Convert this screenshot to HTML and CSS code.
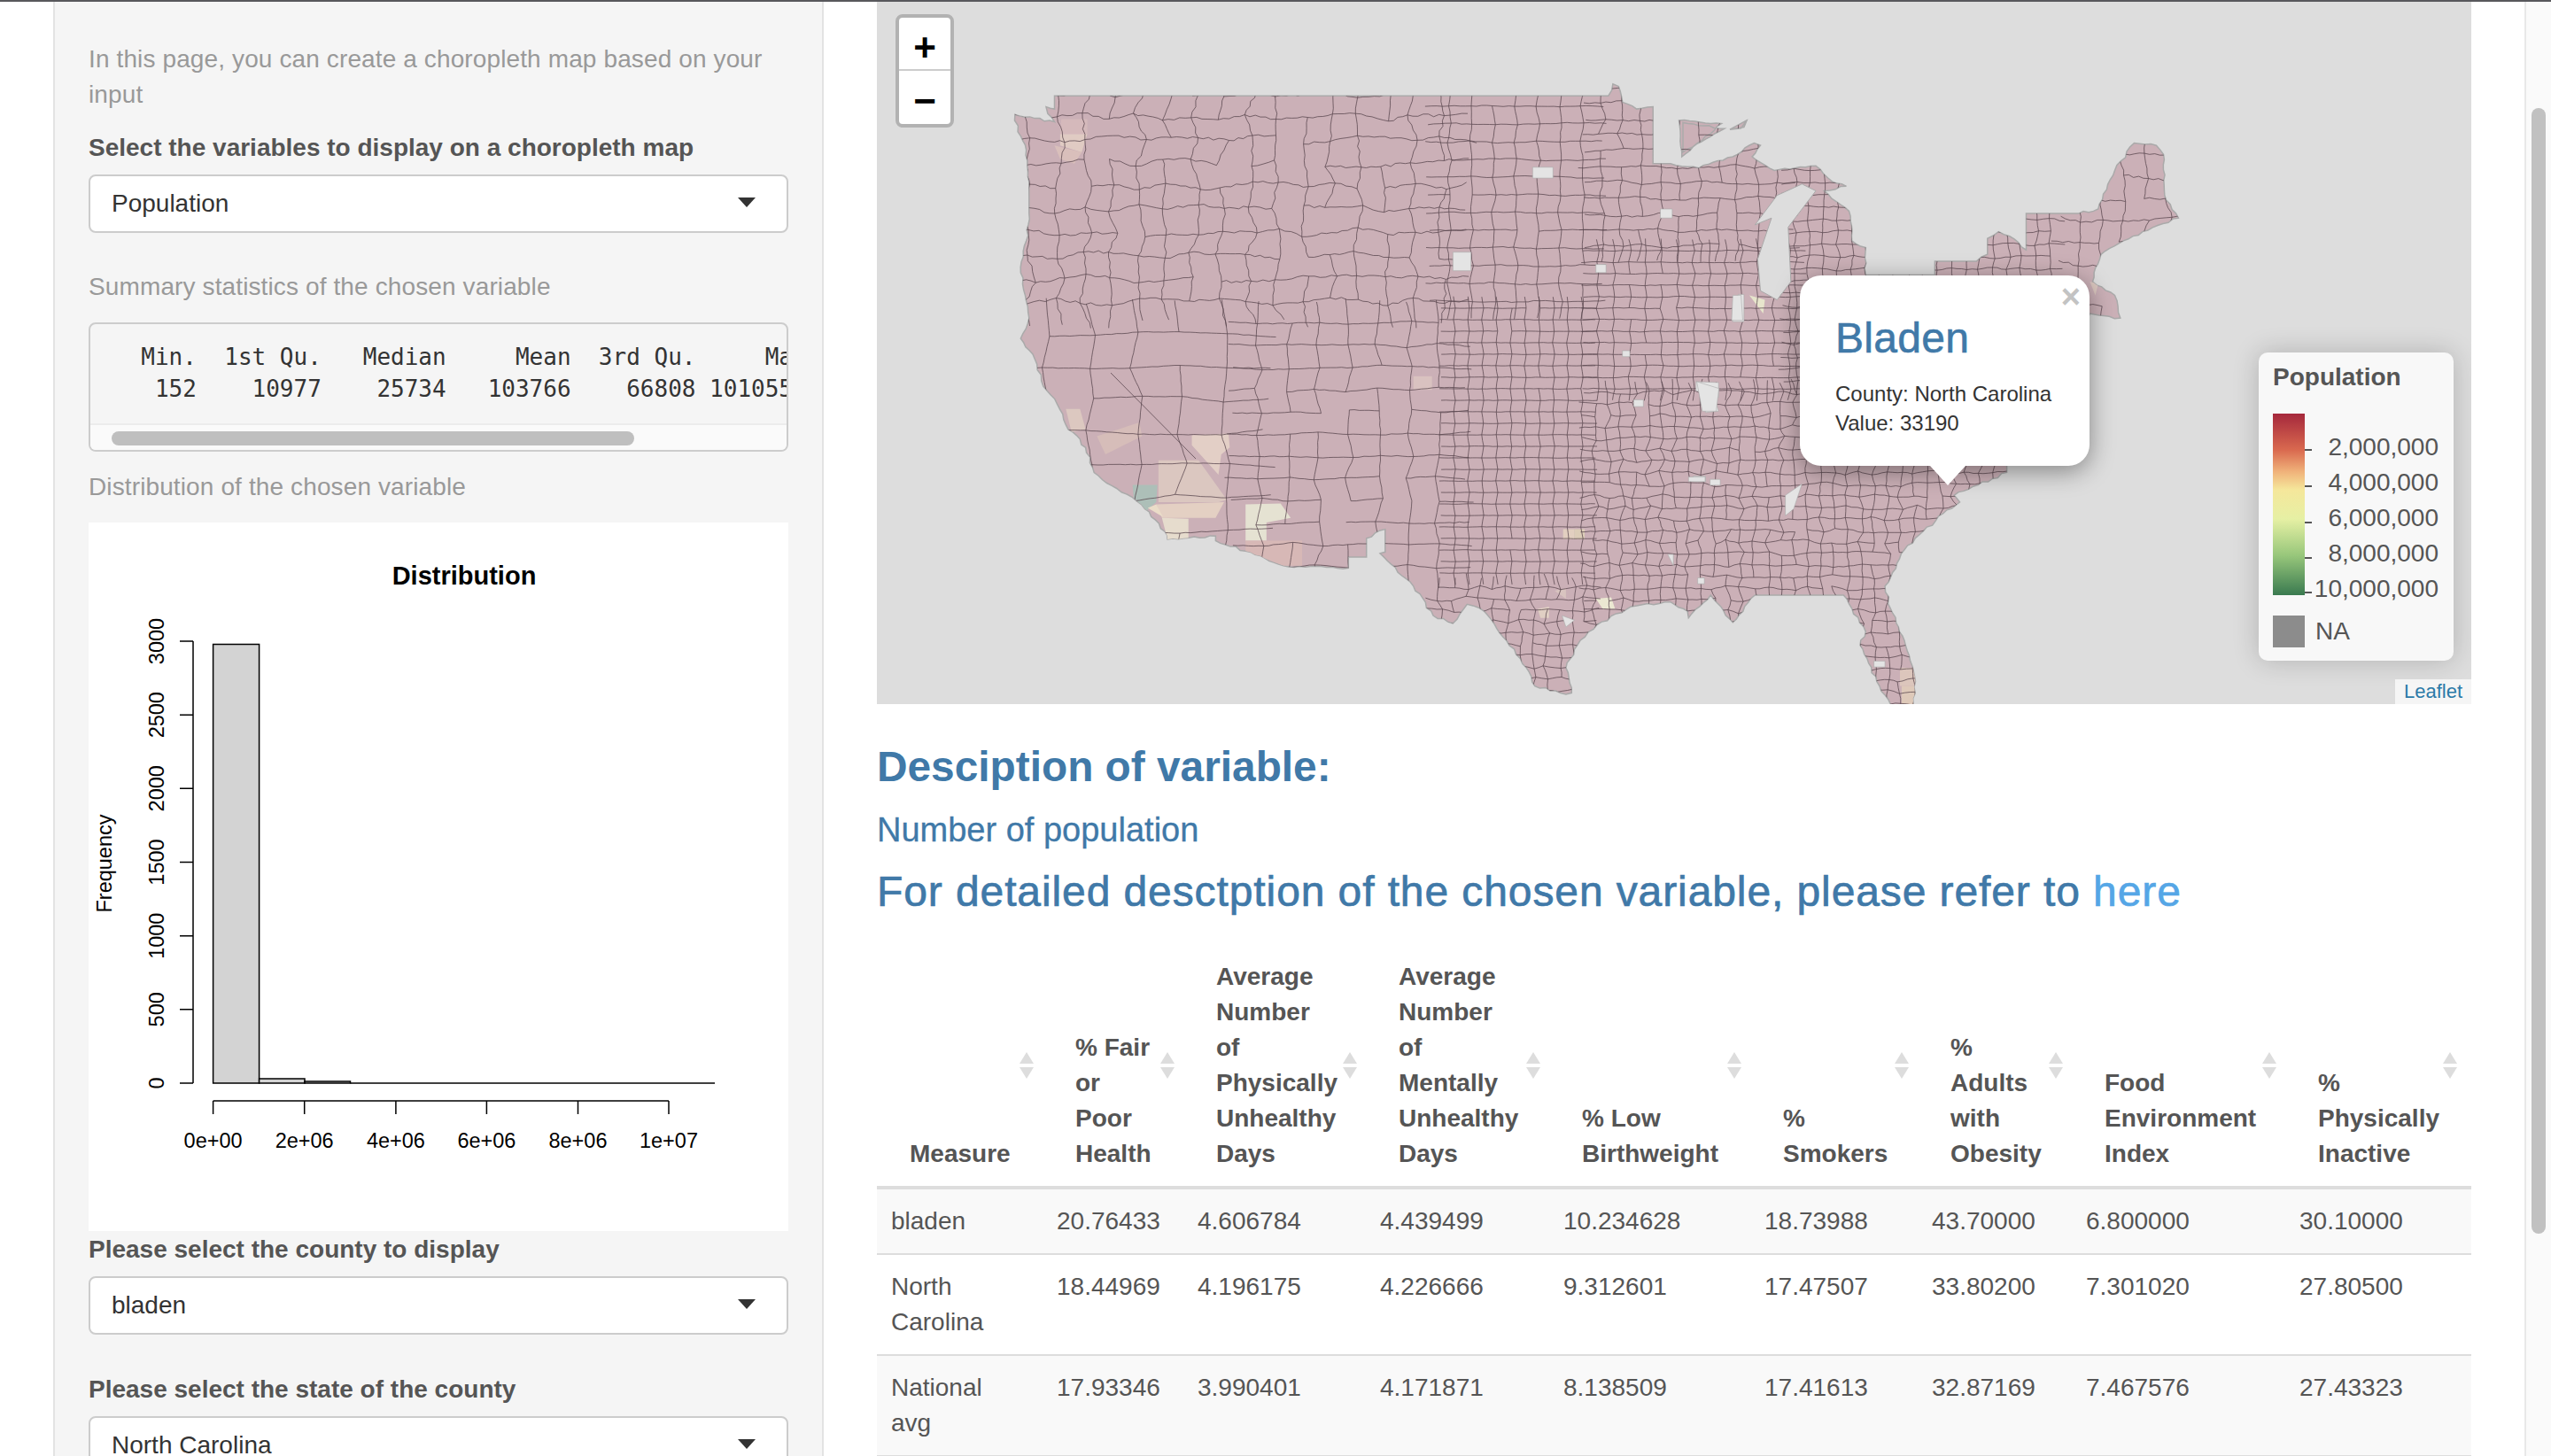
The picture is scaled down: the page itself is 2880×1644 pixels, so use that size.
FILE: index.html
```html
<!DOCTYPE html>
<html lang="en">
<head>
    <meta charset="UTF-8">
    <title>Choropleth map</title>
    <link rel="stylesheet" href="styles.css">
</head>
<body>
    <div class="sidebar">
        <p class="help intro">In this page, you can create a choropleth map based on your input</p>
        <div class="field-label first-label">Select the variables to display on a choropleth map</div>
        <div class="select-box"><span>Population</span><span class="caret"></span></div>

        <p class="help summary-title">Summary statistics of the chosen variable</p>
        <div class="summary-box">
            <pre class="summary-text">  Min.  1st Qu.   Median     Mean  3rd Qu.     Max. 
   152    10977    25734   103766    66808 10105518 </pre>
            <div class="scroll-track"><div class="scroll-thumb"></div></div>
        </div>

        <p class="help dist-title">Distribution of the chosen variable</p>
        <svg class="hist" viewBox="100 590 790 800" width="790" height="800">
            <text class="hist-title" x="524" y="660" text-anchor="middle">Distribution</text>
            <g class="hist-line">
                <path d="M218 724V1223M203 724H218M203 807.2H218M203 890.3H218M203 973.5H218M203 1056.7H218M203 1139.8H218M203 1223H218"/>
                <path d="M240.6 1243H755M240.6 1243V1258M343.7 1243V1258M446.9 1243V1258M549.4 1243V1258M652.5 1243V1258M755 1243V1258"/>
                <rect class="bar" x="240.6" y="727.5" width="52" height="495.5"/>
                <rect class="bar" x="292.6" y="1218" width="51.4" height="5"/>
                <rect class="bar" x="344" y="1221" width="51.5" height="2"/>
                <path d="M395.5 1223H807"/>
            </g>
            <g class="hist-tick">
                <text x="240.6" y="1296" text-anchor="middle">0e+00</text>
                <text x="343.7" y="1296" text-anchor="middle">2e+06</text>
                <text x="446.9" y="1296" text-anchor="middle">4e+06</text>
                <text x="549.4" y="1296" text-anchor="middle">6e+06</text>
                <text x="652.5" y="1296" text-anchor="middle">8e+06</text>
                <text x="755" y="1296" text-anchor="middle">1e+07</text>
                <text transform="translate(185 1223) rotate(-90)" text-anchor="middle">0</text>
                <text transform="translate(185 1139.8) rotate(-90)" text-anchor="middle">500</text>
                <text transform="translate(185 1056.7) rotate(-90)" text-anchor="middle">1000</text>
                <text transform="translate(185 973.5) rotate(-90)" text-anchor="middle">1500</text>
                <text transform="translate(185 890.3) rotate(-90)" text-anchor="middle">2000</text>
                <text transform="translate(185 807.2) rotate(-90)" text-anchor="middle">2500</text>
                <text transform="translate(185 724) rotate(-90)" text-anchor="middle">3000</text>
                <text transform="translate(126 975) rotate(-90)" text-anchor="middle">Frequency</text>
            </g>
        </svg>

        <div class="field-label county-label">Please select the county to display</div>
        <div class="select-box"><span>bladen</span><span class="caret"></span></div>
        <div class="field-label state-label">Please select the state of the county</div>
        <div class="select-box"><span>North Carolina</span><span class="caret"></span></div>
    </div>

    <div class="main">
        <div class="map">
            <svg id="usMap" class="map-svg" viewBox="990 2 1800 793" width="1800" height="793"></svg>

            <div class="zoom-control">
                <div class="zoom-btn zoom-in">+</div>
                <div class="zoom-btn">&minus;</div>
            </div>

            <div class="popup">
                <span class="popup-close">&times;</span>
                <h3 class="popup-title">Bladen</h3>
                <div class="popup-text">County: North Carolina<br>Value: 33190</div>
            </div>

            <div class="legend">
                <div class="legend-title">Population</div>
                <div class="legend-scale">
                    <div class="legend-ramp">
                        <i class="legend-tick tick-1"></i><i class="legend-tick tick-2"></i><i class="legend-tick tick-3"></i><i class="legend-tick tick-4"></i><i class="legend-tick tick-5"></i>
                    </div>
                    <div class="legend-labels">
                        <span>2,000,000</span><span>4,000,000</span><span>6,000,000</span><span>8,000,000</span><span>10,000,000</span>
                    </div>
                </div>
                <div class="legend-na"><span class="na-box"></span><span>NA</span></div>
            </div>

            <div class="attribution">Leaflet</div>
        </div>

        <h3 class="heading desc-heading">Desciption of variable:</h3>
        <h4 class="heading number-heading">Number of population</h4>
        <h3 class="heading detail-heading">For detailed desctption of the chosen variable, please refer to <a class="here" href="#">here</a></h3>

        <table class="stats">
            <colgroup>
                <col class="c1"><col class="c2"><col class="c3"><col class="c4"><col class="c5"><col class="c6"><col class="c7"><col class="c8"><col class="c9">
            </colgroup>
            <thead>
                <tr>
                    <th>Measure</th>
                    <th>% Fair<br>or<br>Poor<br>Health</th>
                    <th>Average<br>Number<br>of<br>Physically<br>Unhealthy<br>Days</th>
                    <th>Average<br>Number<br>of<br>Mentally<br>Unhealthy<br>Days</th>
                    <th>% Low<br>Birthweight</th>
                    <th>%<br>Smokers</th>
                    <th>%<br>Adults<br>with<br>Obesity</th>
                    <th>Food<br>Environment<br>Index</th>
                    <th>%<br>Physically<br>Inactive</th>
                </tr>
            </thead>
            <tbody>
                <tr class="odd">
                    <td>bladen</td><td>20.76433</td><td>4.606784</td><td>4.439499</td><td>10.234628</td><td>18.73988</td><td>43.70000</td><td>6.800000</td><td>30.10000</td>
                </tr>
                <tr>
                    <td>North<br>Carolina</td><td>18.44969</td><td>4.196175</td><td>4.226666</td><td>9.312601</td><td>17.47507</td><td>33.80200</td><td>7.301020</td><td>27.80500</td>
                </tr>
                <tr class="odd">
                    <td>National<br>avg</td><td>17.93346</td><td>3.990401</td><td>4.171871</td><td>8.138509</td><td>17.41613</td><td>32.87169</td><td>7.467576</td><td>27.43323</td>
                </tr>
            </tbody>
        </table>
    </div>

    <div class="page-scroll"><div class="page-thumb"></div></div>

    <script src="map.js"></script>
</body>
</html>
```

FILE: styles.css
```css
html, body {
    margin: 0;
    height: 100%;
}

body {
    box-sizing: border-box;
    height: 1644px;
    display: flex;
    overflow: hidden;
    background-color: #fff;
    border-top: 2px solid #58585c;
    font-family: "Liberation Sans", Arial, sans-serif;
    font-size: 28px;
    line-height: 40px;
    color: #555;
}

/* left panel */
.sidebar {
    box-sizing: border-box;
    flex: none;
    width: 870px;
    margin-left: 60px;
    padding: 45px 38px 0;
    background-color: #f5f5f5;
    border-left: 2px solid #e3e3e3;
    border-right: 2px solid #e3e3e3;
    overflow: hidden;
}

.help {
    margin: 0;
    color: #999;
    letter-spacing: 0.12px;
}

.field-label {
    font-weight: bold;
    color: #555;
}

.first-label { margin-top: 20px; }
.summary-title { margin-top: 41px; }
.dist-title { margin-top: 20px; }
.county-label { margin-top: 1px; }
.state-label { margin-top: 42px; }

.select-box {
    box-sizing: border-box;
    display: flex;
    justify-content: space-between;
    align-items: center;
    height: 66px;
    margin-top: 10px;
    padding: 0 35px 0 24px;
    background-color: #fff;
    border: 2px solid #ccc;
    border-radius: 8px;
    color: #333;
}

.caret {
    width: 0;
    height: 0;
    margin-top: -4px;
    border-left: 10px solid transparent;
    border-right: 10px solid transparent;
    border-top: 11px solid #333;
}

.summary-box {
    box-sizing: border-box;
    height: 146px;
    margin-top: 20px;
    background-color: #f5f5f5;
    border: 2px solid #ccc;
    border-radius: 8px;
    overflow: hidden;
}

.summary-text {
    height: 93px;
    margin: 0;
    padding: 19px 0 0 26px;
    font-family: "DejaVu Sans Mono", "Liberation Mono", monospace;
    font-size: 26px;
    line-height: 36px;
    color: #333;
    overflow: hidden;
    white-space: pre;
}

.scroll-track {
    height: 30px;
    padding: 7px 0 0 24px;
    box-sizing: border-box;
    background-color: #fafafa;
    border-top: 2px solid #ececec;
}

.scroll-thumb {
    width: 590px;
    height: 16px;
    background-color: #bfbfbf;
    border-radius: 8px;
}

.hist {
    display: block;
    margin-top: 20px;
    background-color: #fff;
}

.hist-title {
    font-size: 29px;
    font-weight: bold;
    fill: #000;
}

.hist-line {
    fill: none;
    stroke: #000;
    stroke-width: 1.5;
}

.hist-line .bar {
    fill: #d3d3d3;
}

.hist-tick {
    font-size: 23.5px;
    fill: #000;
}

/* right side */
.main {
    flex: none;
    width: 1800px;
    margin-left: 60px;
    overflow: hidden;
}

.map {
    position: relative;
    height: 793px;
    background-color: #ddd;
    overflow: hidden;
}

.map-svg {
    display: block;
}

.zoom-control {
    position: absolute;
    left: 21px;
    top: 14px;
    width: 58px;
    background-color: #fff;
    border: 4px solid #b2b2b2;
    border-radius: 8px;
}

.zoom-btn {
    height: 60px;
    font-size: 44px;
    font-weight: bold;
    line-height: 68px;
    text-align: center;
    color: #000;
}

.zoom-in {
    border-bottom: 2px solid #ccc;
    height: 58px;
}

.popup {
    box-sizing: border-box;
    position: absolute;
    left: 1042px;
    top: 309px;
    width: 327px;
    height: 215px;
    padding: 44px 20px 0 40px;
    background-color: #fff;
    border-radius: 24px;
    box-shadow: 0 6px 28px rgba(0, 0, 0, 0.4);
    color: #333;
}

.popup::after {
    content: "";
    position: absolute;
    left: 147px;
    top: 100%;
    width: 0;
    height: 0;
    border-left: 20px solid transparent;
    border-right: 20px solid transparent;
    border-top: 22px solid #fff;
}

.popup-close {
    position: absolute;
    right: 10px;
    top: 4px;
    font-size: 38px;
    font-weight: bold;
    line-height: 40px;
    color: #c3c3c3;
}

.popup-title {
    margin: 0;
    font-size: 48px;
    font-weight: normal;
    letter-spacing: 0.3px;
    line-height: 53px;
    color: #4079a8;
    -webkit-text-stroke: 0.6px #4079a8;
}

.popup-text {
    margin-top: 20px;
    font-size: 24px;
    line-height: 33px;
}

.legend {
    box-sizing: border-box;
    position: absolute;
    left: 1560px;
    top: 396px;
    width: 220px;
    height: 348px;
    padding: 7px 16px 0;
    background-color: #f8f8f8;
    border-radius: 10px;
    box-shadow: 0 0 30px rgba(0, 0, 0, 0.2);
    color: #555;
}

.legend-title {
    height: 42px;
    font-weight: bold;
    line-height: 42px;
}

.legend-scale {
    display: flex;
    height: 205px;
    margin-top: 20px;
}

.legend-ramp {
    position: relative;
    flex: none;
    width: 36px;
    height: 205px;
    background: linear-gradient(#a5283c, #d9694f 20%, #f0b27a 32%, #f5e79b 42%, #e6f0a4 58%, #98c77b 78%, #3a7a50);
}

.legend-tick {
    position: absolute;
    left: 36px;
    width: 8px;
    height: 2px;
    background-color: #555;
}

.tick-1 { top: 40px; }
.tick-2 { top: 81px; }
.tick-3 { top: 122px; }
.tick-4 { top: 162px; }
.tick-5 { top: 201px; }

.legend-labels {
    display: flex;
    flex: 1;
    flex-direction: column;
    align-items: flex-end;
    padding-top: 18px;
    margin-right: 1px;
    line-height: 40px;
}

.legend-na {
    display: flex;
    align-items: center;
    gap: 12px;
    margin-top: 21px;
}

.na-box {
    width: 36px;
    height: 36px;
    background-color: #8c8c8c;
}

.attribution {
    position: absolute;
    right: 0;
    bottom: 0;
    width: 86px;
    height: 28px;
    background-color: rgba(255, 255, 255, 0.7);
    font-size: 22px;
    line-height: 28px;
    text-align: center;
    color: #2c7aa8;
}

.heading {
    margin: 0;
    font-weight: normal;
    color: #4079a8;
}

.desc-heading {
    margin-top: 41px;
    font-size: 47.8px;
    font-weight: bold;
    line-height: 60px;
}

.number-heading {
    margin-top: 21px;
    font-size: 38px;
    line-height: 40px;
    -webkit-text-stroke: 0.3px #4079a8;
}

.detail-heading {
    margin-top: 20px;
    font-size: 48px;
    letter-spacing: 0.9px;
    line-height: 60px;
    -webkit-text-stroke: 0.7px #4079a8;
}

.here {
    color: #55a6e6;
    -webkit-text-stroke: 0.7px #55a6e6;
    text-decoration: none;
}

.stats {
    width: 1800px;
    margin-top: 30px;
    border-collapse: collapse;
    table-layout: fixed;
}

.c1 { width: 187px; }
.c2 { width: 159px; }
.c3 { width: 206px; }
.c4 { width: 207px; }
.c5 { width: 227px; }
.c6 { width: 189px; }
.c7 { width: 174px; }
.c8 { width: 241px; }
.c9 { width: 210px; }

.stats th {
    position: relative;
    padding: 16px 0 16px 37px;
    border-bottom: 4px solid #ddd;
    font-weight: bold;
    text-align: left;
    vertical-align: bottom;
}

/* sort arrows */
.stats th::before,
.stats th::after {
    content: "";
    position: absolute;
    right: 10px;
    width: 0;
    height: 0;
    border-left: 8px solid transparent;
    border-right: 8px solid transparent;
}

.stats th:last-child::before,
.stats th:last-child::after {
    right: 16px;
}

.stats th::before {
    top: calc(50% - 15px);
    border-bottom: 13px solid #ddd;
}

.stats th::after {
    top: calc(50% + 2px);
    border-top: 13px solid #ddd;
}

.stats td {
    padding: 16px;
    border-bottom: 2px solid #ddd;
    vertical-align: top;
}

.stats .odd {
    background-color: #f9f9f9;
}

.page-scroll {
    box-sizing: border-box;
    flex: none;
    width: 30px;
    margin-left: 60px;
    padding: 120px 0 0 6px;
    background-color: #fafafa;
    border-left: 2px solid #e8e8e8;
}

.page-thumb {
    width: 16px;
    height: 1271px;
    background-color: #c1c1c1;
    border-radius: 8px;
}
```

FILE: map.js
```js
// draws the county map on the svg: outline traced by hand, county mesh generated
const svgNs = 'http://www.w3.org/2000/svg';
const mapSvg = document.getElementById('usMap');

// the two traces were made on differently scaled crops
const west = (x, y) => [980 + x * 0.638, y * 0.513];
const east = (x, y) => [1900 + x * 0.625, y * 0.513];

let seed = 4711;
function rnd() {
    seed = (seed * 16807) % 2147483647;
    return seed / 2147483647;
}

function toPairs(fn, list) {
    const out = [];
    for (let i = 0; i < list.length; i += 2) {
        out.push(fn(list[i], list[i + 1]));
    }
    return out;
}

function toPoints(fn, list) {
    return toPairs(fn, list).map(p => p[0].toFixed(1) + ',' + p[1].toFixed(1));
}

function add(parent, tag, attrs) {
    const el = document.createElementNS(svgNs, tag);
    Object.keys(attrs).forEach(k => el.setAttribute(k, attrs[k]));
    parent.appendChild(el);
    return el;
}

// a wobbly line between two points, without the leading move
function wobbleTo(x1, y1, x2, y2, amount) {
    let d = '';
    const len = Math.hypot(x2 - x1, y2 - y1);
    const steps = amount > 0 ? Math.max(1, Math.round(len / 6)) : 1;
    const nx = len ? (y2 - y1) / len : 0;
    const ny = len ? (x1 - x2) / len : 0;
    for (let i = 1; i <= steps; i++) {
        const t = i / steps;
        const off = i === steps ? 0 : (rnd() - 0.5) * amount;
        d += 'L' + (x1 + (x2 - x1) * t + nx * off).toFixed(1) + ' ' + (y1 + (y2 - y1) * t + ny * off).toFixed(1);
    }
    return d;
}

function wobble(x1, y1, x2, y2, amount) {
    return 'M' + x1.toFixed(1) + ' ' + y1.toFixed(1) + wobbleTo(x1, y1, x2, y2, amount);
}

const outlineTop = [330,211, 1310,211, 1318,185, 1328,190, 1335,225, 1360,240, 1389,235, 1389,360, 1420,360, 1470,370, 1530,345, 1568,315];
const outlineEast = [140,320, 125,345, 165,375, 240,365, 270,400, 295,410, 255,420, 300,465, 305,530, 330,545, 328,590, 330,605, 455,605, 455,575,
    530,575, 550,560, 550,525, 570,510, 590,520, 620,550, 620,470, 715,470, 750,460, 780,375, 815,315, 855,320, 868,340, 870,430, 895,480, 830,510,
    755,560, 745,590, 740,620, 780,650, 790,700, 760,695, 735,690, 700,900, 585,1000, 585,1040, 490,1090, 500,1105, 470,1130, 400,1210, 365,1290,
    375,1340, 400,1410, 420,1500, 415,1575, 380,1560, 350,1500, 320,1420, 330,1390, 290,1310, 130,1310, 90,1370, 50,1310, 10,1360];
const outlineSouth = [1450,1345, 1420,1325, 1350,1335, 1290,1375, 1255,1420, 1235,1470, 1245,1525, 1235,1528, 1180,1510, 1165,1470, 1130,1410, 1090,1345,
    1060,1330, 1035,1372, 1000,1355, 965,1290, 906,1218, 915,1215, 915,1165, 882,1185, 882,1226, 850,1226, 850,1250, 735,1245, 668,1213, 615,1190, 615,1180,
    530,1187, 525,1170, 490,1120, 468,1095, 440,1075, 400,1040, 385,985, 350,935, 335,890, 310,850, 295,790, 270,745, 285,700, 278,650, 270,600, 280,530,
    285,470, 285,400, 280,330, 265,290, 260,252, 330,268, 318,250, 315,235, 330,240];

// coast gets a rough edge, borders that run straight stay straight
function roughPath(pairs, amount) {
    let d = 'M' + pairs[0][0].toFixed(1) + ' ' + pairs[0][1].toFixed(1);
    for (let i = 0; i < pairs.length; i++) {
        const a = pairs[i];
        const b = pairs[(i + 1) % pairs.length];
        const straight = Math.abs(a[0] - b[0]) < 1 || Math.abs(a[1] - b[1]) < 1;
        d += wobbleTo(a[0], a[1], b[0], b[1], straight ? 0 : amount);
    }
    return d + 'Z';
}

const outline = roughPath(toPairs(west, outlineTop).concat(toPairs(east, outlineEast), toPairs(west, outlineSouth)), 3);
const islandA = roughPath(toPairs(west, [1435,265, 1510,272, 1440,345]), 2);
const islandB = 'M' + toPoints(west, [1525,285, 1555,265, 1550,280]).join('L') + 'Z';
const islandC = roughPath(toPairs(east, [0,270, 75,283, 0,335]), 2);
const islandD = 'M' + toPoints(east, [85,285, 115,265, 105,282]).join('L') + 'Z';
const allLand = [outline, islandA, islandB, islandC, islandD].join(' ');

const defs = add(mapSvg, 'defs', {});
const clip = add(defs, 'clipPath', { id: 'landClip' });
add(clip, 'path', { d: allLand });

add(mapSvg, 'path', { d: allLand, fill: '#cbb0b7', stroke: '#aaa', 'stroke-width': 1.5 });

// jittered grid of shared corners; some edges are dropped so cells differ in size.
// the outer edges are left open so no straight seam shows between two meshes
function mesh(x0, x1, y0, y1, cw, ch, jitter, amount, drop) {
    const cols = Math.ceil((x1 - x0) / cw);
    const rows = Math.ceil((y1 - y0) / ch);
    const pts = [];
    for (let i = 0; i <= cols; i++) {
        pts[i] = [];
        for (let j = 0; j <= rows; j++) {
            pts[i][j] = [
                x0 + i * cw + (rnd() - 0.5) * cw * jitter + (j % 2 ? cw * 0.12 : 0),
                y0 + j * ch + (rnd() - 0.5) * ch * jitter
            ];
        }
    }
    let d = '';
    for (let i = 0; i <= cols; i++) {
        for (let j = 0; j <= rows; j++) {
            const p = pts[i][j];
            if (i < cols && j > 0 && j < rows && rnd() > drop) {
                const q = pts[i + 1][j];
                d += wobble(p[0], p[1], q[0], q[1], amount);
            }
            if (j < rows && i > 0 && i < cols && rnd() > drop) {
                const q = pts[i][j + 1];
                d += wobble(p[0], p[1], q[0], q[1], amount);
            }
        }
    }
    return d;
}

const land = add(mapSvg, 'g', { 'clip-path': 'url(#landClip)' });

// coloured counties, under the mesh lines
const counties = [
    [west, '#adbfb8', [468,1067, 512,1067, 510,1105, 492,1125, 470,1095]],
    [west, '#dbc7c0', [514,1013, 585,1013, 635,1100, 620,1105, 514,1105]],
    [west, '#e4d0c3', [510,1110, 630,1105, 615,1140, 520,1140]],
    [west, '#e6dccd', [520,1140, 567,1142, 567,1187, 530,1187]],
    [west, '#eadcc8', [495,1118, 510,1110, 522,1138]],
    [west, '#e3cfc6', [573,958, 638,954, 640,985, 625,1000, 620,1045, 573,980]],
    [west, '#e5e2d2', [668,1110, 730,1108, 748,1140, 705,1150, 705,1190, 668,1190]],
    [west, '#d7b8b6', [668,1190, 768,1190, 768,1245, 735,1245, 668,1213]],
    [west, '#e0cbc3', [340,295, 388,295, 378,335, 340,320]],
    [west, '#d5b9bb', [342,262, 388,262, 388,295, 340,295]],
    [west, '#d9bfbb', [330,320, 378,335, 365,360, 340,350]],
    [west, '#ebe8d2', [1288,1318, 1315,1315, 1322,1340, 1300,1340]],
    [west, '#e2cfc0', [1230,1165, 1250,1165, 1250,1187, 1230,1187]],
    [west, '#dccdb8', [1250,1165, 1268,1165, 1268,1187, 1250,1187]],
    [west, '#e0cfc3', [1185,1340, 1205,1335, 1205,1360, 1190,1360]],
    [west, '#d9c4c0', [1215,1300, 1235,1295, 1235,1318]],
    [west, '#d6bdb9', [405,960, 480,930, 485,960, 420,1000]],
    [west, '#dcc8c0', [350,900, 375,900, 385,945, 360,950]],
    [west, '#d9c2c0', [965,828, 998,828, 998,858, 965,858]],
    [east, '#dcc6bc', [392,1470, 420,1470, 420,1510, 392,1510]],
    [east, '#dec9b9', [395,1510, 420,1510, 420,1560, 395,1560]],
    [east, '#dcc8c0', [735,620, 750,625, 745,650]],
    [east, '#e7e5cc', [120,650, 148,660, 145,690]]
];
counties.forEach(c => {
    add(land, 'polygon', { points: toPoints(c[0], c[2]).join(' '), fill: c[1] });
});

const lines = [
    mesh(1130, 1640, 80, 345, 31, 26, 0.42, 3, 0.08),
    mesh(1130, 1395, 340, 660, 50, 37, 0.2, 0.8, 0.12),
    mesh(1385, 1640, 340, 660, 34, 25, 0.22, 1, 0.1),
    mesh(1610, 1800, 80, 345, 25, 20, 0.12, 1.2, 0.04),
    mesh(1625, 1800, 335, 660, 16, 13, 0.04, 0.5, 0.02),
    mesh(1610, 1800, 650, 810, 15, 13, 0.42, 1.2, 0.06),
    mesh(1785, 2020, 270, 440, 18, 13, 0.1, 0.8, 0.02),
    mesh(1785, 2020, 80, 280, 22, 18, 0.3, 1.8, 0.06),
    mesh(2010, 2330, 80, 440, 16, 14, 0.3, 1.5, 0.04),
    mesh(1785, 2330, 430, 810, 15, 13, 0.42, 1.4, 0.05),
    mesh(2320, 2490, 80, 410, 25, 24, 0.4, 2.6, 0.12),
    wobble(1254, 421, 1350, 518, 0)
].join('');
add(land, 'path', { d: lines, fill: 'none', stroke: '#57444c', 'stroke-opacity': 0.75, 'stroke-width': 1 });

// counties with no data, drawn pale over the mesh
const holes = [
    [west, [1176,368, 1212,368, 1212,392, 1176,392]],
    [west, [1402,460, 1423,460, 1423,480, 1402,480]],
    [west, [1035,555, 1067,555, 1067,596, 1035,596]],
    [west, [1288,582, 1306,582, 1306,600, 1288,600]],
    [west, [1530,680, 1540,648, 1550,648, 1550,708, 1530,708]],
    [west, [1465,840, 1505,842, 1505,875, 1465,860]],
    [west, [1480,890, 1500,885, 1505,905, 1482,908]],
    [west, [1355,880, 1372,880, 1372,895, 1355,895]],
    [west, [1335,772, 1348,772, 1348,785, 1335,785]],
    [west, [1460,1048, 1482,1048, 1482,1060, 1460,1060]],
    [west, [1490,1055, 1508,1055, 1508,1068, 1490,1068]],
    [west, [1228,1355, 1250,1365, 1235,1380]],
    [west, [1415,1220, 1425,1220, 1425,1245]],
    [west, [1468,1272, 1480,1272, 1480,1285, 1468,1285]],
    [east, [25,840, 65,855, 60,905, 35,905]],
    [east, [90,650, 105,650, 108,705, 88,705]],
    [east, [185,1090, 215,1065, 200,1120, 185,1135]],
    [east, [10,1050, 40,1050, 40,1060, 10,1060]],
    [east, [345,1455, 365,1455, 365,1468, 345,1468]]
];
holes.forEach(h => {
    add(mapSvg, 'polygon', { points: toPoints(h[0], h[1]).join(' '), fill: '#e4e4e4', stroke: '#aaa', 'stroke-width': 0.6 });
});

// the big lake
const lake = [215,405, 240,420, 190,500, 195,620, 170,660, 140,640, 135,570, 160,480, 130,495, 170,430];
add(mapSvg, 'polygon', { points: toPoints(east, lake).join(' '), fill: '#ddd', stroke: '#aaa', 'stroke-width': 1 });
```
